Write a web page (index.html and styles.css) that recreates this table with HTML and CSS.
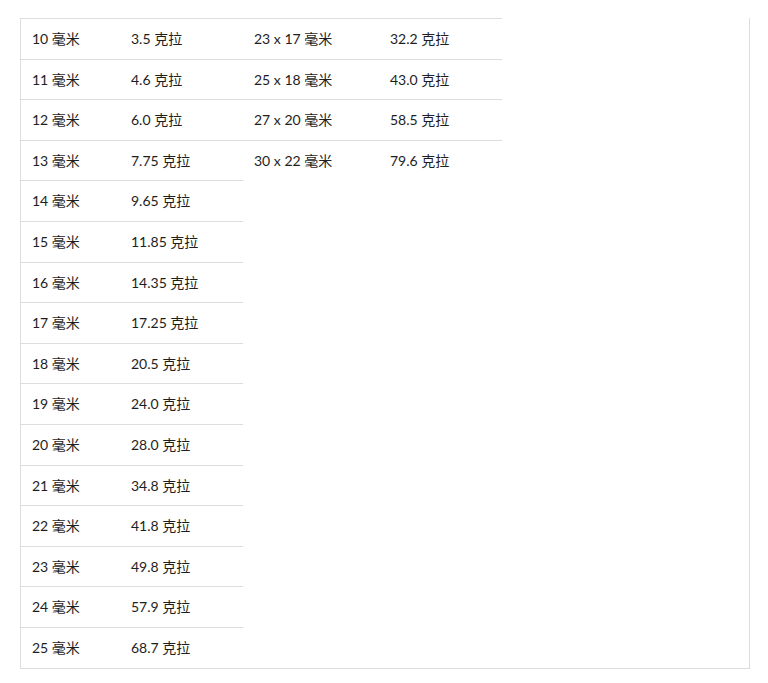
FILE: index.html
```html
<!DOCTYPE html>
<html lang="zh">
<head>
<meta charset="utf-8">
<link rel="stylesheet" href="styles.css">
</head>
<body>
<div class="box">
  <table class="sizes sizes-left">
    <tr><td class="c1">10 毫米</td><td class="c2">3.5 克拉</td></tr>
    <tr><td class="c1">11 毫米</td><td class="c2">4.6 克拉</td></tr>
    <tr><td class="c1">12 毫米</td><td class="c2">6.0 克拉</td></tr>
    <tr><td class="c1">13 毫米</td><td class="c2">7.75 克拉</td></tr>
    <tr><td class="c1">14 毫米</td><td class="c2">9.65 克拉</td></tr>
    <tr><td class="c1">15 毫米</td><td class="c2">11.85 克拉</td></tr>
    <tr><td class="c1">16 毫米</td><td class="c2">14.35 克拉</td></tr>
    <tr><td class="c1">17 毫米</td><td class="c2">17.25 克拉</td></tr>
    <tr><td class="c1">18 毫米</td><td class="c2">20.5 克拉</td></tr>
    <tr><td class="c1">19 毫米</td><td class="c2">24.0 克拉</td></tr>
    <tr><td class="c1">20 毫米</td><td class="c2">28.0 克拉</td></tr>
    <tr><td class="c1">21 毫米</td><td class="c2">34.8 克拉</td></tr>
    <tr><td class="c1">22 毫米</td><td class="c2">41.8 克拉</td></tr>
    <tr><td class="c1">23 毫米</td><td class="c2">49.8 克拉</td></tr>
    <tr><td class="c1">24 毫米</td><td class="c2">57.9 克拉</td></tr>
    <tr><td class="c1">25 毫米</td><td class="c2">68.7 克拉</td></tr>
  </table>
  <table class="sizes sizes-right">
    <tr><td class="c3">23 x 17 毫米</td><td class="c4">32.2 克拉</td></tr>
    <tr><td class="c3">25 x 18 毫米</td><td class="c4">43.0 克拉</td></tr>
    <tr><td class="c3">27 x 20 毫米</td><td class="c4">58.5 克拉</td></tr>
    <tr><td class="c3">30 x 22 毫米</td><td class="c4">79.6 克拉</td></tr>
  </table>
</div>
</body>
</html>
```
FILE: styles.css
```css
html, body {
  margin: 0;
  padding: 0;
  background: #fff;
}
body {
  padding: 18px 18px 0 20px;
  font-family: Lato, "Noto Sans CJK SC", sans-serif;
  font-size: 14px;
  color: #1e1e1e;
}
.box {
  display: flex;
  align-items: flex-start;
  width: 728px;
  border: 1px solid #ddd;
  border-top: none;
}
.sizes {
  border-collapse: collapse;
  border-spacing: 0;
  table-layout: fixed;
  flex: none;
}
.sizes-left { width: 222px; }
.sizes-right { width: 259px; }
.sizes td {
  border-top: 1px solid #ddd;
  padding: 10px 10px 10px 11px;
  line-height: 19.6px;
  white-space: nowrap;
  text-align: left;
  vertical-align: middle;
}
.c1 { width: 78px; }
.c2 { width: 102px; }
.c3 { width: 115px; }
.c4 { width: 102px; }
```
